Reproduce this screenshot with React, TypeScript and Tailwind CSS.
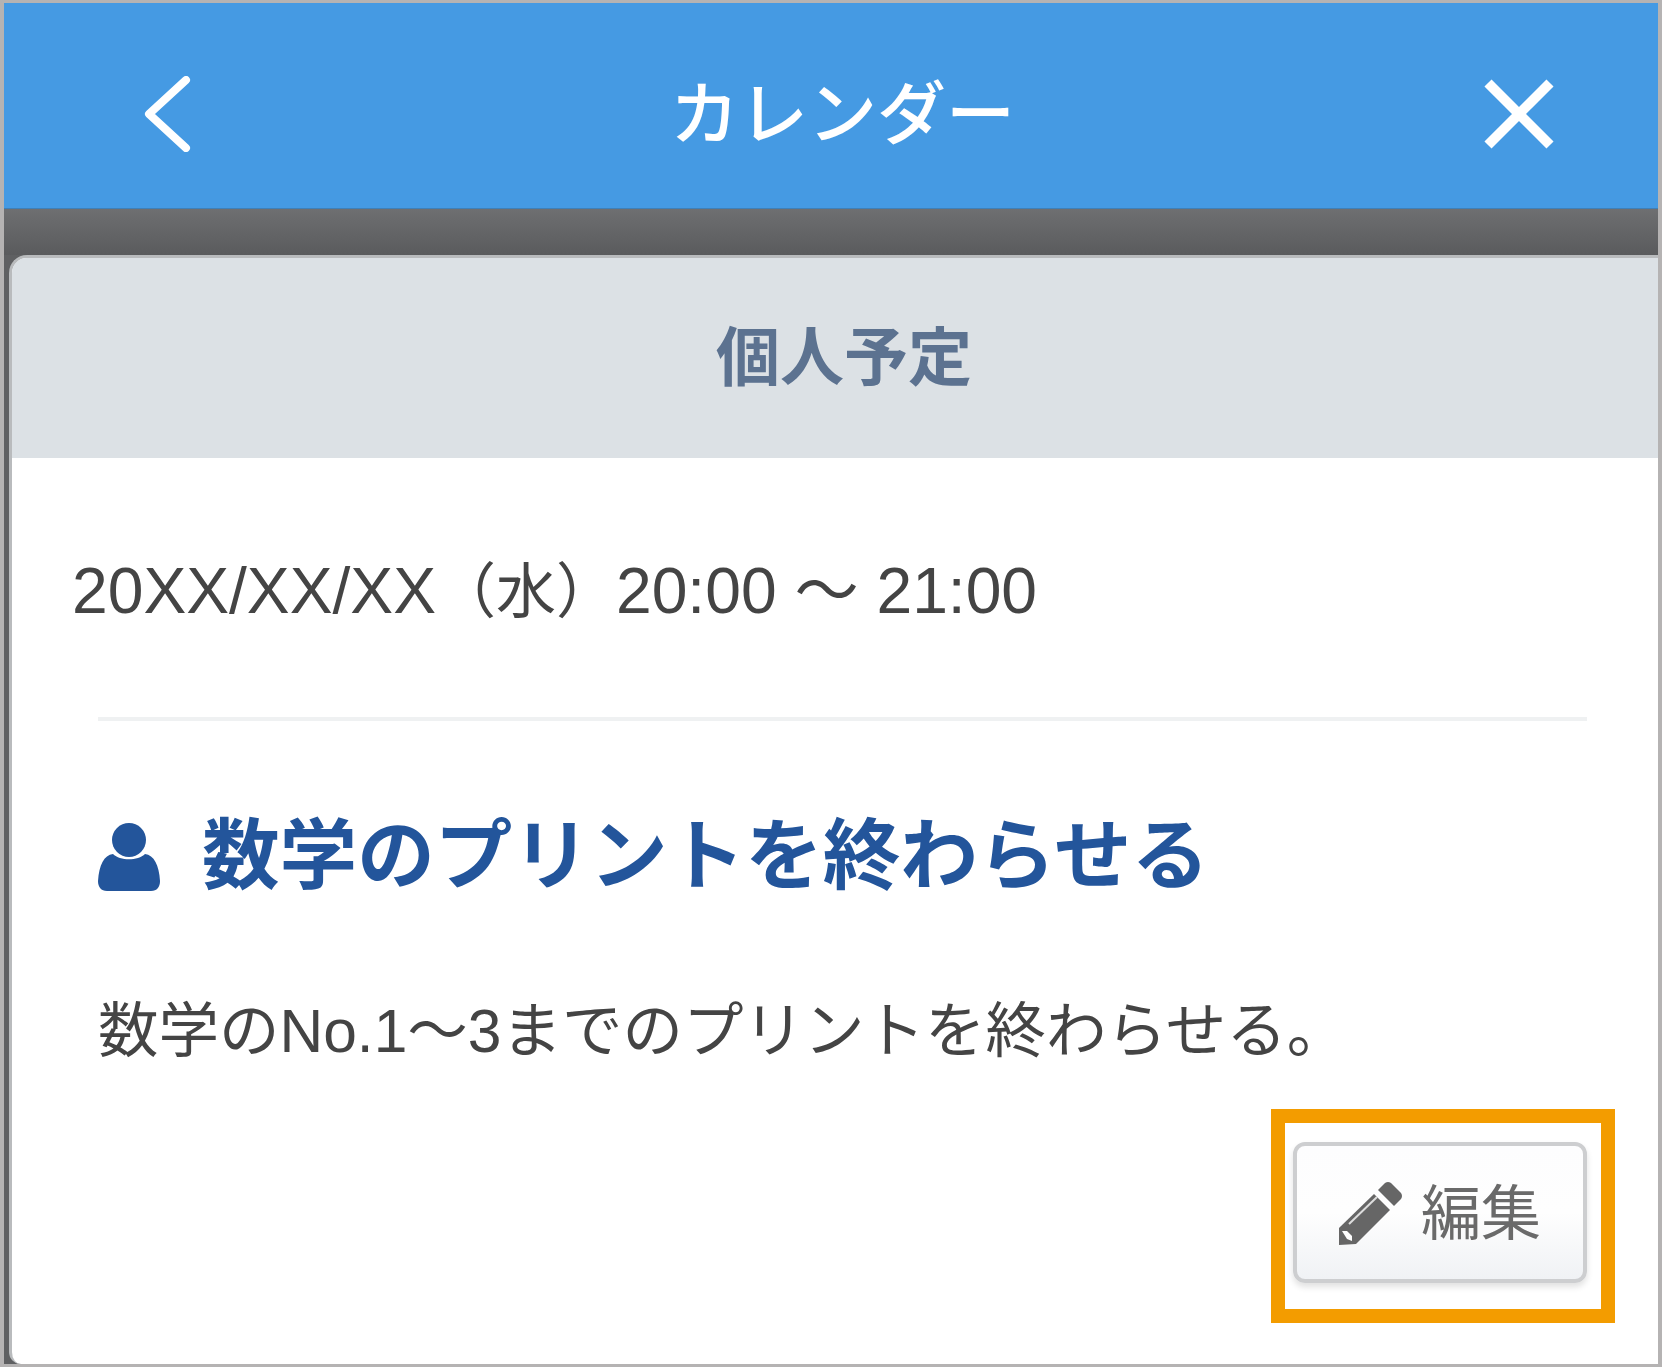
const cjk = { fontFamily: '"Liberation Sans", "Noto Sans CJK JP", sans-serif' };

export default function App() {
  return (
    <div
      style={cjk}
      className="w-[1662px] h-[1367px] flex flex-col bg-[#5f6062] border-t-[3px] border-l-[4px] border-r-[4px] border-b-[3px] border-[#b5b3b3] overflow-hidden"
    >
      <header className="h-[206px] shrink-0 bg-[#459ae3] border-b border-[#3f80b8] flex items-center justify-between pt-[19px] pl-[140px] pr-[103px]">
        <svg width="48" height="76" viewBox="0 0 48 76" fill="none" className="mt-[-3px]">
          <path d="M42 4 L5 38 L42 72" stroke="#fff" strokeWidth="8" strokeLinecap="round" strokeLinejoin="round" />
        </svg>
        <h1 className="text-[69px] leading-none font-medium text-white tracking-normal ml-[10px]">カレンダー</h1>
        <svg width="72" height="72" viewBox="0 0 72 72" fill="none" className="mt-[-3px]">
          <path d="M5 5 L67 67 M67 5 L5 67" stroke="#fff" strokeWidth="10" />
        </svg>
      </header>
      <div className="h-[46px] shrink-0 bg-gradient-to-b from-[#6e6f71] to-[#5a5b5d]" />
      <main className="flex-1 min-h-0 ml-[5px] flex flex-col bg-white rounded-tl-[18px] rounded-bl-[12px] border-t-[3px] border-l-[3px] border-[#b9bbbd] overflow-hidden relative">
        <div className="h-[200px] shrink-0 bg-[#dce1e5] flex items-center justify-center pl-[18px]">
          <h2 className="text-[64px] leading-none font-bold text-[#5c7290]">個人予定</h2>
        </div>
        <div className="flex-1 flex flex-col pl-[60px] pr-[71px]">
          <p className="text-[64.2px] leading-none text-[#444] mt-[101px] whitespace-nowrap">
            20XX/XX/XX<span className="text-[60px]">（水）</span>20:00 〜 21:00
          </p>
          <div className="ml-[26px] mt-[94px] h-[4px] bg-[#eff1f2]" />
          <div className="ml-[26px] mt-[97px] flex items-center gap-[42px]">
            <svg width="62" height="68" viewBox="0 0 62 68" fill="#23559b">
              <circle cx="31" cy="17" r="17" />
              <path d="M15 31 C22 38 40 38 47 31 C56 32 61 42 62 58 C62 64 59 68 53 68 H9 C3 68 0 64 0 58 C1 42 6 32 15 31 Z" />
            </svg>
            <h3 className="text-[77.6px] leading-none font-bold text-[#23559b] whitespace-nowrap">数学のプリントを終わらせる</h3>
          </div>
          <p className="ml-[26px] mt-[105px] text-[60.5px] leading-none text-[#444] whitespace-nowrap">
            数学のNo.1〜3までのプリントを終わらせる。
          </p>
          <div className="flex justify-end mt-[81px]">
            <div className="relative">
              <button className="w-[294px] h-[141px] rounded-[12px] border-[4px] border-[#cdced0] bg-gradient-to-b from-[#fdfdfe] via-[#fefefe] to-[#f0f2f5] shadow-[0_4px_6px_rgba(0,0,0,0.12)] flex items-center justify-center gap-[18px] text-[60px] text-[#6a6a6a]">
                <svg width="64" height="64" viewBox="0 0 64 64" fill="#666">
                  <path d="M46 2 Q49 0 52 2 L62 12 Q64 15 62 18 L55 25 L39 9 Z" />
                  <path d="M35 13 L51 29 L17 63 L0 64 L0 47 Z" />
                  <path d="M10 43 L38 16" stroke="#ddd" strokeWidth="2" fill="none" />
                  <path d="M3 50 L8 50 L13 55 L13 60 L8 58 Z" fill="#fff" />
                </svg>
                <span className="pt-[4px]">編集</span>
              </button>
              <div className="absolute left-[-22px] top-[-33px] w-[344px] h-[214px] border-[14px] border-[#f39c00]" />
            </div>
          </div>
        </div>
      </main>
    </div>
  );
}
